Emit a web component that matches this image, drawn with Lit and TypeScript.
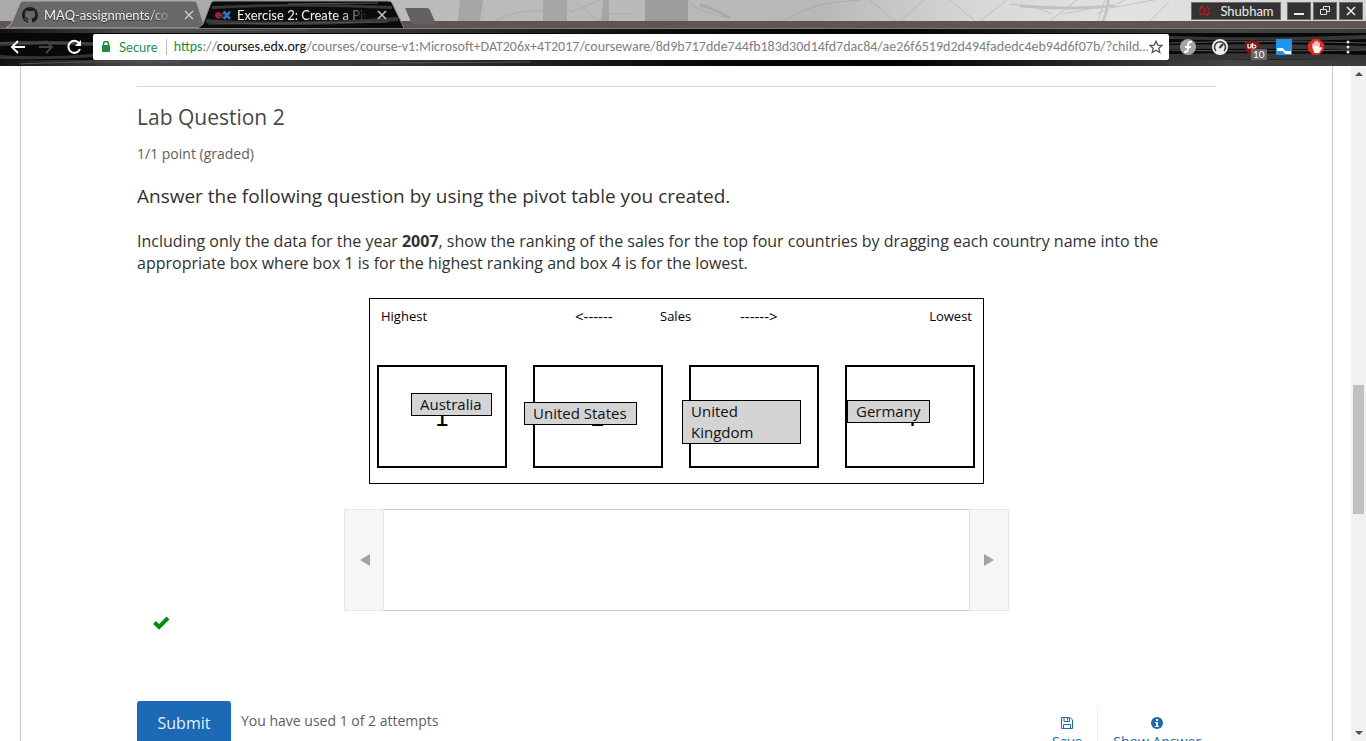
import { LitElement, html, svg, css } from "lit";
import { customElement } from "lit/decorators.js";

@customElement("browser-chrome")
class BrowserChrome extends LitElement {
  static styles = css`
    :host { display: block; position: relative; height: 66px; flex: none; overflow: hidden; font-family: Lato, Carlito, sans-serif; background: #000; }
    * { box-sizing: border-box; }
    .scene { position: absolute; inset: 0; width: 100%; height: 66px; }
    .strip { position: relative; display: flex; height: 28px; align-items: flex-start; justify-content: space-between; }
    .tabs { display: flex; padding-left: 6px; }
    .tab { position: relative; display: flex; align-items: center; width: 200px; height: 28px; padding: 1px 16px 0 16px; color: #f2f2f2; font-size: 13px; text-shadow: 0 1px 1px #222; }
    .tab + .tab { margin-left: -8px; padding-left: 17px; width: 206px; }
    .shape { position: absolute; inset: 0; width: 100%; height: 28px; }
    .tab .ico, .name, .close { position: relative; flex: none; }
    .name { width: 132px; margin-left: 6px; overflow: hidden; white-space: nowrap; -webkit-mask-image: linear-gradient(90deg, #000 104px, transparent 130px); mask-image: linear-gradient(90deg, #000 104px, transparent 130px); line-height: 20px; }
    button { border: 0; padding: 0; background: none; font: inherit; color: inherit; display: flex; align-items: center; justify-content: center; flex: none; }
    .close { width: 12px; height: 16px; margin-left: 7px; }
    .new { width: 34px; height: 16px; margin-top: 8px; }
    .wins { display: flex; gap: 2px; padding: 2px 3px 0 0; }
    .wins button { width: 24px; height: 18px; background: #333; border: 1px solid #6d6d6d; }
    .wins .user { width: 90px; gap: 9px; margin-right: 4px; color: #eee; font-size: 13px; line-height: 16px; }
    .bar { position: relative; display: flex; align-items: center; height: 38px; padding: 0 10px 0 9px; }
    .nav { display: flex; gap: 10px; width: 84px; }
    .address { flex: 1; min-width: 0; display: flex; align-items: center; height: 26px; background: #fff; border-radius: 2px; padding: 0 6px 0 8px; font-size: 13px; line-height: 20px; color: #808080; }
    .secure { color: #1b8f43; margin-left: 8px; padding-right: 8px; border-right: 1px solid #b8b8b8; line-height: 16px; }
    .url { flex: 1; min-width: 0; overflow: hidden; white-space: nowrap; margin: 0 1px 0 7px; font-family: Carlito, Lato, sans-serif; font-size: 14px; }
    .url b { font-weight: 400; color: #111; }
    .url i { font-style: normal; color: #1b8f43; }
    .ext { display: flex; gap: 16px; margin-left: 11px; align-items: center; }
    .ext button { position: relative; width: 16px; height: 18px; }
    .badge { position: absolute; left: 7px; top: 11px; background: #666; color: #fff; font-size: 10px; line-height: 11px; padding: 0 2px; border-radius: 1px; }
  `;
  scene() {
    return svg`<svg class="scene" viewBox="0 0 1366 66" preserveAspectRatio="none" aria-hidden="true">
      <defs>
        <linearGradient id="fog"><stop offset="0" stop-color="#aaa"/><stop offset=".2" stop-color="#aaa"/><stop offset=".3" stop-color="#bcbcbc"/><stop offset=".6" stop-color="#b8b8b8"/><stop offset=".72" stop-color="#d8d8d8"/><stop offset=".82" stop-color="#e2e2e2"/><stop offset="1" stop-color="#d5d5d5"/></linearGradient>
        <linearGradient id="streak"><stop offset="0" stop-color="#111"/><stop offset=".1" stop-color="#4a4a4a"/><stop offset=".3" stop-color="#333"/><stop offset=".5" stop-color="#0a0a0a"/><stop offset=".65" stop-color="#000"/><stop offset=".9" stop-color="#444"/><stop offset="1" stop-color="#3a3a3a"/></linearGradient>
      </defs>
      <rect width="1366" height="21" fill="url(#fog)"/>
      <path fill="#929292" opacity=".5" d="M460 0h23l-3 21h-22zM543 0h24v21h-24zM603 0h6v21h-8z"/>
      <path fill="#8a8a8a" opacity=".6" d="M645 0h43v21h-43z"/>
      <g fill="none" stroke="#8f8f8f" opacity=".35">
        <path d="M495 21q20-12 48-10M570 12l30-12M575 2l24 19M609 14h22M690 4q15 9 35 13M785 20q25-15 52-18l24-2M870 0l25 21M900 21l24-21M950 0l24 20M980 21l27-21M1010 4q30 3 42 10M1050 21l27-21M1062 14l50-9M1105 0l-7 21M1125 0l-28 14M1110 8l44-8M1150 21l19-19"/>
        <path stroke-width="3" d="M700 5q15 4 30 13M1020 6q50 4 95 0M1108 0q0 10-5 21"/>
      </g>
      <rect y="21" width="1366" height="7" fill="#5f5552"/>
      <rect y="28" width="1366" height="1" fill="#837b78"/>
      <rect y="29" width="1366" height="4" fill="url(#streak)"/>
      <rect y="33" width="1366" height="28" fill="#080808"/>
      <rect y="60" width="1366" height="6" fill="url(#streak)"/>
      <path fill="#363636" d="M0 42q50-3 93 1v3q-50-3-93 0zM0 55q40 3 93-1v3q-40 3-93 2zM1169 36q90 3 197-1v4q-90 3-197 0zM1169 45q90-2 197 1v4q-90-2-197-1zM1169 54q90-2 197 1v6q-90-3-197 0z"/>
      <path fill="none" stroke="#555" d="M0 43h93M1169 43q90-3 197 0M1169 50q80 2 197 0M20 64q60-3 160-2M380 63l150-1M120 31l190-1"/>
    </svg>`;
  }
  render() {
    const x = svg`<svg width="10" height="10" viewBox="0 0 10 10"><path d="M1 1l8 8M9 1L1 9" stroke="#c4c4c4" stroke-width="1.600"/></svg>`;
    return html`${this.scene()}
      <div class="strip">
        <div class="tabs">
          <div class="tab">
            <svg class="shape" viewBox="0 0 200 28" preserveAspectRatio="none"><path d="M0 28L5 24L14 3Q15 1 17 1H187Q190 1 191 3L199 28z" fill="#686868" stroke="#aaa"/></svg>
            <svg class="ico" width="16" height="16" viewBox="0 0 16 16"><path fill="#1e1e1e" d="M8 0C3.58 0 0 3.58 0 8c0 3.54 2.29 6.53 5.47 7.59.4.07.55-.17.55-.38 0-.19-.01-.82-.01-1.49-2.01.37-2.53-.49-2.69-.94-.09-.23-.48-.94-.82-1.13-.28-.15-.68-.52-.01-.53.63-.01 1.08.58 1.23.82.72 1.21 1.87.87 2.33.66.07-.52.28-.87.51-1.07-1.78-.2-3.64-.89-3.64-3.95 0-.87.31-1.59.82-2.15-.08-.2-.36-1.02.08-2.12 0 0 .67-.21 2.2.82a7.6 7.6 0 014 0c1.53-1.04 2.2-.82 2.2-.82.44 1.1.16 1.92.08 2.12.51.56.82 1.27.82 2.15 0 3.07-1.87 3.75-3.65 3.95.29.25.54.73.54 1.48 0 1.07-.01 1.93-.01 2.2 0 .21.15.46.55.38A8.01 8.01 0 0016 8c0-4.42-3.58-8-8-8z"/></svg>
            <span class="name">MAQ-assignments/co</span>
            <button class="close" aria-label="Close tab">${x}</button>
          </div>
          <div class="tab">
            <svg class="shape" viewBox="0 0 206 28" preserveAspectRatio="none"><path d="M0 28L5 24L13 3Q14 1 16 1H190Q193 1 194 3L206 28z" fill="#0b0b0b"/><path d="M14 6q80-4 180 0v3q-90-5-180 0zM8 19q80 6 192-2v4q-90 7-192 2z" fill="#383838"/><path d="M90 4l90-1M10 24l180-2" stroke="#555"/><path d="M0 28L5 24L13 3Q14 1 16 1H190Q193 1 194 3L206 28" fill="none" stroke="#8b8b8b"/></svg>
            <svg class="ico" width="16" height="16" viewBox="0 0 16 16"><path d="M1 8.500H5Q5 6 3 6T1 8.500T5 10.800" fill="none" stroke="#b5184e" stroke-width="1.800"/><path d="M9.500 6.500H7Q5.500 8.500 7 10.500H9V4" fill="none" stroke="#555" stroke-width="1.200"/><path d="M9 4.500l6 7.500M15 4.500l-6 7.500" stroke="#2478e0" stroke-width="2.400"/></svg>
            <span class="name">Exercise 2: Create a Piv</span>
            <button class="close" aria-label="Close tab">${x}</button>
          </div>
          <button class="new" aria-label="New tab"><svg width="34" height="16" viewBox="0 0 34 16"><path d="M1 0H23Q25 0 26 2L32 16H10Q8 16 7 14z" fill="#626262"/></svg></button>
        </div>
        <div class="wins">
          <button class="user"><svg width="13" height="12" viewBox="0 0 13 12"><path d="M4.500 1.500Q1.500 3 1.500 6t3 4.500M8.500 1.500q3 1.500 3 4.500t-3 4.500" fill="none" stroke="#c4161c" stroke-width="1.500" stroke-dasharray="5 1"/><path d="M2 1h3v3zM11 11H8V8z" fill="#c4161c"/><path d="M6.500 3v4M6.500 8v2" stroke="#c4161c" stroke-width="1.500"/></svg>Shubham</button>
          <button aria-label="Minimize"><svg width="12" height="12"><path d="M1 9h10" stroke="#eee" stroke-width="2"/></svg></button>
          <button aria-label="Restore"><svg width="12" height="12" fill="none" stroke="#e0e0e0"><path d="M4.500 4V1.500h6v5H8M1.500 4.500h6v5h-6z"/></svg></button>
          <button aria-label="Close"><svg width="12" height="12"><path d="M2 2l8 8M10 2l-8 8" stroke="#eee" stroke-width="1.500"/></svg></button>
        </div>
      </div>
      <div class="bar">
        <div class="nav">
          <button aria-label="Back"><svg width="18" height="18" fill="none" stroke="#fff" stroke-width="2"><path d="M16 9H3M9 3L3 9l6 6"/></svg></button>
          <button aria-label="Forward"><svg width="18" height="18" fill="none" stroke="#444" stroke-width="2"><path d="M2 9h13M9 3l6 6-6 6"/></svg></button>
          <button aria-label="Reload"><svg width="18" height="18" fill="none" stroke="#fff" stroke-width="2"><path d="M14 5a6 6 0 1 0 1 6"/><path d="M16 2v6h-6z" fill="#fff" stroke="none"/></svg></button>
        </div>
        <div class="address">
          <svg width="10" height="12"><path d="M2.500 5V3a2.500 2.500 0 0 1 5 0v2" fill="none" stroke="#218a3c" stroke-width="1.500"/><rect x="1" y="4" width="8" height="7" rx="1" fill="#218a3c"/></svg>
          <span class="secure">Secure</span>
          <span class="url" role="textbox" aria-label="Address"><i>https</i>://<b>courses.edx.org</b>/courses/course-v1:Microsoft+DAT206x+4T2017/courseware/8d9b717dde744fb183d30d14fd7dac84/ae26f6519d2d494fadedc4eb94d6f07b/?child…</span>
          <button aria-label="Bookmark"><svg width="14" height="14" viewBox="0 0 14 14"><path d="M7 1.200l1.800 3.900 4.200.4-3.200 2.800 1 4.200L7 10.300l-3.800 2.200 1-4.200L1 5.500l4.200-.4z" fill="none" stroke="#555" stroke-width="1.300"/></svg></button>
        </div>
        <div class="ext">
          <button aria-label="Fedora"><svg width="16" height="16"><circle cx="8" cy="8" r="8" fill="#a5a5a5"/><path d="M12 3Q8 2 8 6v4q0 3-4 3M5 8h6" fill="none" stroke="#fff" stroke-width="1.800"/></svg></button>
          <button aria-label="Speed"><svg width="16" height="16"><circle cx="8" cy="8" r="8" fill="#ededed"/><path d="M4 12a5.500 5.500 0 1 1 8 0" fill="none" stroke="#333" stroke-width="1.500"/><path d="M7.500 9L11 5" stroke="#333" stroke-width="2"/></svg></button>
          <button aria-label="uBlock"><svg width="16" height="16"><path d="M8 1q3 2 7 1.500V8q0 5-7 8-7-3-7-8V2.500Q5 3 8 1z" fill="#80180f"/><path d="M4 5v3q0 1 1.500 1T7 8V5M8.500 4v5H10q2 0 2-1.500T10 6H9" fill="none" stroke="#fff" stroke-width="1.200"/></svg><span class="badge">10</span></button>
          <button aria-label="Screenshot"><svg width="16" height="16"><rect width="16" height="16" fill="#1d96f0"/><path d="M1 9h6q1 3 4 3h4v3h-5q-2 0-3-3H1z" fill="#fff"/></svg></button>
          <button aria-label="AdBlock"><svg width="16" height="16"><path d="M5 0h6l5 5v6l-5 5H5l-5-5V5z" fill="#e6281e"/><path d="M4.500 9V4.500h1.300V7h.6V2.500h1.400V7h.5V1.800h1.400V7h.5V3.500h1.400V9l1.500-1 1 1L11 14H6.500z" fill="#fff"/></svg></button>
          <button aria-label="Menu"><svg width="16" height="16" fill="#e4e4e4"><circle cx="8" cy="3" r="1.500"/><circle cx="8" cy="8" r="1.500"/><circle cx="8" cy="13" r="1.500"/></svg></button>
        </div>
      </div>`;
  }
}

@customElement("ranking-board")
class RankingBoard extends LitElement {
  static styles = css`
    * { box-sizing: border-box; }
    :host { display: flex; flex-direction: column; align-items: center; gap: 25px; }
    .board { position: relative; width: 615px; border: 1px solid #000; padding: 7px 7px 15px; color: #000; }
    .legend { display: grid; grid-template-columns: 194px 85px 80px 1fr auto; padding: 0 4px; margin-bottom: 39px; font-size: 13px; line-height: 20px; }
    .arrow { font-size: 15px; }
    .slots { display: grid; grid-template-columns: repeat(4, 130px); gap: 26px; }
    .slot { height: 103px; border: 2px solid #000; font: 24px/103px "DejaVu Sans", sans-serif; text-align: center; }
    .item { position: absolute; border: 1px solid #000; background: #d4d4d4; padding: 0 9px 0 8px; color: #111; font-size: 15px; line-height: 21px; }
    .australia { left: 41px; top: 94px; }
    .states { left: 154px; top: 103px; }
    .kingdom { left: 312px; top: 101px; width: 119px; }
    .germany { left: 477px; top: 101px; }
    .carousel { display: flex; width: 665px; height: 102px; }
    .carousel div { flex: 1; border: solid #c8c8c8; border-width: 1px 0; }
    .carousel button { width: 40px; border: 1px solid #e6e6e6; background: #f6f6f6; padding: 0; display: flex; align-items: center; justify-content: center; }
  `;
  render() {
    return html`
      <div class="board">
        <div class="legend"><span>Highest</span><span class="arrow">&lt;------</span><span>Sales</span><span class="arrow">------&gt;</span><span>Lowest</span></div>
        <div class="slots">${[1, 2, 3, 4].map((n) => html`<div class="slot">${n}</div>`)}</div>
        <div class="item australia" draggable="true">Australia</div>
        <div class="item states" draggable="true">United States</div>
        <div class="item kingdom" draggable="true">United Kingdom</div>
        <div class="item germany" draggable="true">Germany</div>
      </div>
      <div class="carousel">
        <button aria-label="Previous"><svg width="12" height="12"><path d="M12 0v12L2 6z" fill="#a3a3a3"/></svg></button>
        <div></div>
        <button aria-label="Next"><svg width="12" height="12"><path d="M1 0v12l10-6z" fill="#a3a3a3"/></svg></button>
      </div>`;
  }
}

@customElement("app-root")
class AppRoot extends LitElement {
  static styles = css`
    * { box-sizing: border-box; }
    :host { display: flex; flex-direction: column; height: 100vh; overflow: hidden; background: #fff; font-family: "Open Sans", "Noto Sans", sans-serif; color: #313131; }
    .view { flex: 1; min-height: 0; display: flex; }
    .page { flex: 1; min-width: 0; overflow: hidden; padding: 0 18px 0 20px; }
    main { border: solid #c8c8c8; border-width: 0 1px; padding: 20px 116px 0; min-height: 100%; }
    .problem { border-top: 1px solid #d9d9d9; padding-top: 14px; }
    h2 { margin: 0; font-size: 21px; line-height: 32px; font-weight: 400; color: #474747; }
    .score { margin: 11px 0 0; font-size: 14px; line-height: 20px; color: #5e5e5e; }
    h3 { margin: 18px 0 0; font-size: 19px; line-height: 28px; font-weight: 400; }
    .text { margin: 20px 0 24px; font-size: 16px; line-height: 22px; }
    .check { display: block; margin: 4px 0 0 15px; }
    .actions { display: flex; justify-content: space-between; margin-top: 70px; }
    .left { display: flex; gap: 10px; }
    .submit { width: 94px; height: 44px; border: 0; border-radius: 3px; background: #1c69b5; color: #e4f0fa; font: inherit; font-size: 16px; padding: 0; }
    .used { font-size: 14px; line-height: 40px; color: #5e5e5e; }
    .right { display: flex; padding-top: 4px; }
    .right button { border: 0; background: none; color: #1c69b5; font: inherit; font-size: 14px; line-height: 20px; padding: 12px 15px 0; display: flex; flex-direction: column; align-items: center; gap: 3px; }
    .right button + button { border-left: 1px solid #eee; }
    .scroll { width: 15px; flex: none; background: #f1f1f1; display: grid; grid-template-rows: 319fr 129fr 227fr; justify-items: center; }
    .thumb { width: 11px; background: #c1c1c1; }
    .down { align-self: end; }
    .scroll svg { display: block; margin: 5px 0; }
  `;
  render() {
    return html`<browser-chrome></browser-chrome>
      <div class="view">
        <div class="page"><main><section class="problem">
          <h2>Lab Question 2</h2>
          <p class="score">1/1 point (graded)</p>
          <h3>Answer the following question by using the pivot table you created.</h3>
          <p class="text">Including only the data for the year <strong>2007</strong>, show the ranking of the sales for the top four countries by dragging each country name into the appropriate box where box 1 is for the highest ranking and box 4 is for the lowest.</p>
          <ranking-board></ranking-board>
          <svg class="check" width="18" height="16" viewBox="0 0 18 16"><path d="M2.500 7.500L7 12l9-9" fill="none" stroke="#008f0d" stroke-width="4"/></svg>
          <div class="actions">
            <div class="left"><button class="submit">Submit</button><span class="used">You have used 1 of 2 attempts</span></div>
            <div class="right">
              <button><svg width="12" height="12" viewBox="0 0 12 12" fill="none" stroke="#1c69b5"><path d="M.5.500h8.500l2.500 2.500v8.500H.500zM3 .500v4h5.500v-4M2.500 11.500v-4h7v4M6.500 1v2.500"/></svg>Save</button>
              <button><svg width="12" height="12"><circle cx="6" cy="6" r="6" fill="#1c69b5"/><path d="M5 2h2v2H5zM4 5h3v4h1v1H4V9h1V6H4z" fill="#fff"/></svg>Show Answer</button>
            </div>
          </div>
        </section></main></div>
        <div class="scroll" aria-hidden="true">
          <svg width="8" height="5"><path d="M0 5l4-4 4 4z" fill="#505050"/></svg>
          <span class="thumb"></span>
          <svg class="down" width="8" height="5"><path d="M0 0h8L4 4z" fill="#505050"/></svg>
        </div>
      </div>`;
  }
}
